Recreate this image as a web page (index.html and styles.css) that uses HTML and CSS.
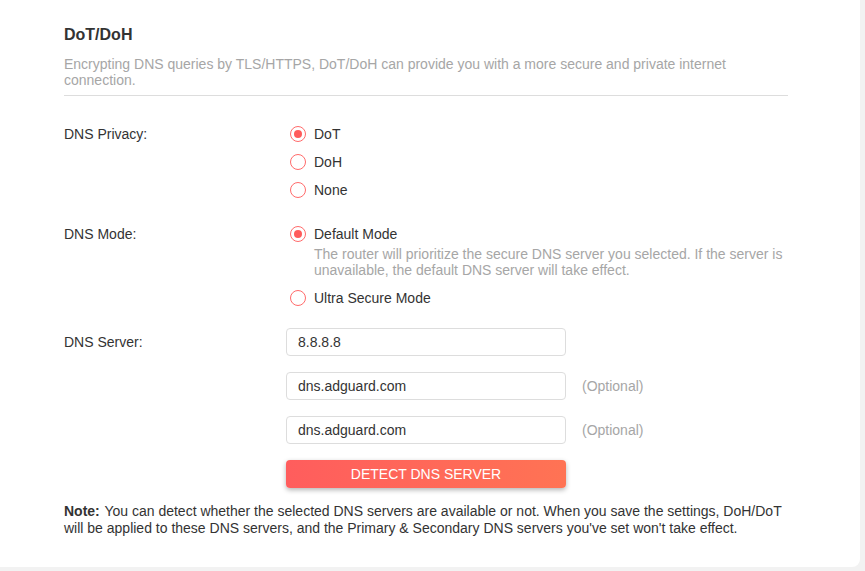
FILE: index.html
```html
<!DOCTYPE html>
<html lang="en">
<head>
  <meta charset="UTF-8">
  <meta name="viewport" content="width=device-width, initial-scale=1.0">
  <title>DoT/DoH</title>
  <link rel="stylesheet" href="styles.css">
</head>
<body>
  <div class="card">
    <div class="section-head">
      <div class="title">DoT/DoH</div>
      <div class="desc">Encrypting DNS queries by TLS/HTTPS, DoT/DoH can provide you with a more secure and private internet connection.</div>
    </div>

    <div class="row privacy">
      <div class="label">DNS Privacy:</div>
      <div class="field">
        <label class="radio checked"><span class="dot"></span>DoT</label>
        <label class="radio"><span class="dot"></span>DoH</label>
        <label class="radio"><span class="dot"></span>None</label>
      </div>
    </div>

    <div class="row mode">
      <div class="label">DNS Mode:</div>
      <div class="field">
        <label class="radio checked"><span class="dot"></span>Default Mode</label>
        <div class="hint">The router will prioritize the secure DNS server you selected. If the server is unavailable, the default DNS server will take effect.</div>
        <label class="radio ultra"><span class="dot"></span>Ultra Secure Mode</label>
      </div>
    </div>

    <div class="row server">
      <div class="label">DNS Server:</div>
      <div class="field">
        <div class="input-line"><input class="text-input" type="text" value="8.8.8.8"></div>
        <div class="input-line"><input class="text-input" type="text" value="dns.adguard.com"><span class="optional">(Optional)</span></div>
        <div class="input-line"><input class="text-input" type="text" value="dns.adguard.com"><span class="optional">(Optional)</span></div>
        <button class="detect">DETECT DNS SERVER</button>
      </div>
    </div>

    <p class="note"><b class="note-tag">Note:</b> You can detect whether the selected DNS servers are available or not. When you save the settings, DoH/DoT will be applied to these DNS servers, and the Primary &amp; Secondary DNS servers you've set won't take effect.</p>
  </div>
</body>
</html>
```

FILE: styles.css
```css
body{
  margin: 0;
  background-color: #f2f2f2;
  font-family: "Liberation Sans", Arial, Helvetica, sans-serif;
  font-size: 14px;
  color: #333;
}
.card{
  width: 860px;
  height: 567px;
  box-sizing: border-box;
  background-color: #fff;
  border-radius: 0 0 8px 0;
  padding: 25px 0 0 64px;
}
.section-head{
  width: 724px;
  border-bottom: 1px solid #ddd;
  padding-bottom: 7px;
}
.title{
  font-size: 16px;
  font-weight: bold;
  line-height: 20px;
  color: #333;
}
.desc{
  margin-top: 11px;
  line-height: 16px;
  color: #a6a6a6;
}
.row{
  display: flex;
}
.privacy{
  margin-top: 24px;
}
.mode{
  margin-top: 16px;
}
.server{
  margin-top: 16px;
}
.label{
  width: 226px;
  line-height: 28px;
  flex-shrink: 0;
}
.field{
  display: flex;
  flex-direction: column;
}
.radio{
  display: flex;
  align-items: center;
  height: 28px;
  cursor: pointer;
}
.dot{
  width: 16px;
  height: 16px;
  box-sizing: border-box;
  border: 1px solid #ff6b6b;
  border-radius: 50%;
  margin-right: 8px;
  display: flex;
  align-items: center;
  justify-content: center;
}
.checked .dot::after{
  content: "";
  width: 8px;
  height: 8px;
  border-radius: 50%;
  background-color: #ff5b5b;
}
.hint{
  width: 472px;
  margin: -2px 0 0 24px;
  line-height: 16px;
  color: #a6a6a6;
}
.ultra{
  margin-top: 6px;
}
.server .field{
  margin-left: -4px;
  gap: 16px;
}
.input-line{
  display: flex;
  align-items: center;
}
.text-input{
  width: 280px;
  height: 28px;
  box-sizing: border-box;
  border: 1px solid #ddd;
  border-radius: 4px;
  padding: 0 11px;
  font-family: "Liberation Sans", Arial, sans-serif;
  font-size: 14px;
  color: #333;
  outline: none;
}
.optional{
  margin-left: 16px;
  color: #a6a6a6;
}
.detect{
  width: 280px;
  height: 28px;
  border: none;
  border-radius: 4px;
  background: linear-gradient(to right, #ff5d5d, #ff7354);
  box-shadow: 0 2px 5px rgba(0, 0, 0, 0.3);
  color: #fff;
  font-family: "Liberation Sans", Arial, sans-serif;
  font-size: 14px;
  cursor: pointer;
}
.note{
  margin: 15px 0 0;
  width: 724px;
  line-height: 17px;
  color: #333;
}
.note-tag{
  margin-right: 1px;
}
```
